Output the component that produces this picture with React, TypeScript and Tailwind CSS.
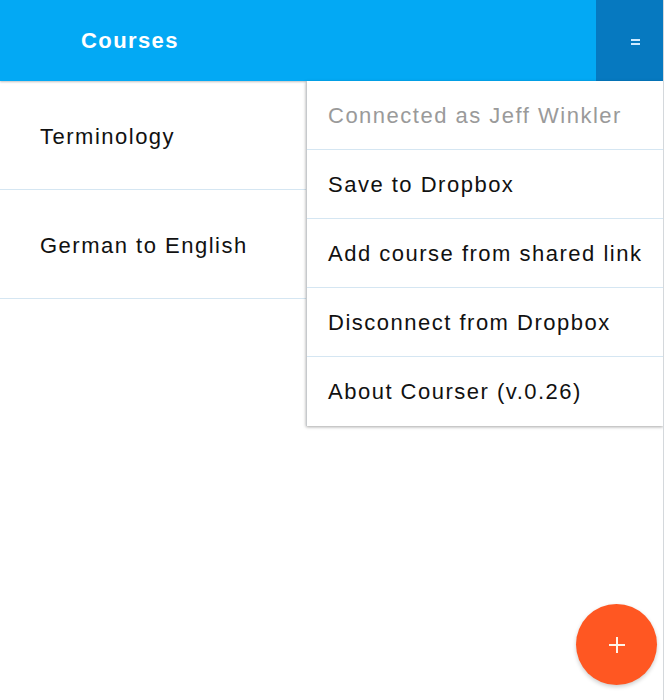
import React from 'react';

const courses = ['Terminology', 'German to English'];

const menuItems = [
  { label: 'Connected as Jeff Winkler', muted: true },
  { label: 'Save to Dropbox' },
  { label: 'Add course from shared link' },
  { label: 'Disconnect from Dropbox' },
  { label: 'About Courser (v.0.26)' },
];

export default function App() {
  return (
    <div
      className="relative h-[700px] w-[664px] overflow-hidden bg-white border-r border-[#d4d8dc]"
      style={{ fontFamily: '"Liberation Sans", Arial, sans-serif' }}
    >
      {/* Top bar */}
      <header className="flex h-[81px] items-stretch bg-[#03a9f4] shadow-[0_1px_2px_rgba(0,0,0,0.25)]">
        <div className="flex flex-1 items-center pl-[81px]">
          <span className="text-[22px] font-bold tracking-[1.4px] text-white">Courses</span>
        </div>
        <button className="flex w-[67px] items-center justify-center bg-[#0679c0]">
          <span className="flex flex-col gap-[2px] pl-[12px] pt-[2px]">
            <span className="block h-[2px] w-[9px] bg-[#cfeaff]" />
            <span className="block h-[2px] w-[9px] bg-[#cfeaff]" />
          </span>
        </button>
      </header>

      {/* Course list */}
      <ul>
        {courses.map((c) => (
          <li
            key={c}
            className="flex h-[109px] items-center border-b border-[#d5e6f2] pl-[40px] pt-[2px] text-[22px] tracking-[1.5px] text-[#111]"
          >
            {c}
          </li>
        ))}
      </ul>

      {/* Dropdown menu */}
      <div className="absolute left-[306px] top-[81px] w-[357px] border-l border-[#c6c9cc] bg-white shadow-[0_1px_3px_rgba(0,0,0,0.35)]">
        {menuItems.map((m, i) => (
          <div
            key={m.label}
            className={`flex h-[69px] items-center pl-[21px] text-[22px] tracking-[1.5px] ${
              i < menuItems.length - 1 ? 'border-b border-[#d5e6f2]' : ''
            } ${m.muted ? 'text-[#9a9a9a]' : 'text-[#111]'}`}
          >
            {m.label}
          </div>
        ))}
      </div>

      {/* Floating add button */}
      <button className="absolute left-[576px] top-[604px] flex h-[81px] w-[81px] items-center justify-center rounded-full bg-[#ff5722] shadow-[0_2px_4px_rgba(0,0,0,0.2)]">
        <svg width="18" height="18" viewBox="0 0 18 18">
          <path d="M9 1v16M1 9h16" stroke="#fff4e8" strokeWidth="2" />
        </svg>
      </button>
    </div>
  );
}
